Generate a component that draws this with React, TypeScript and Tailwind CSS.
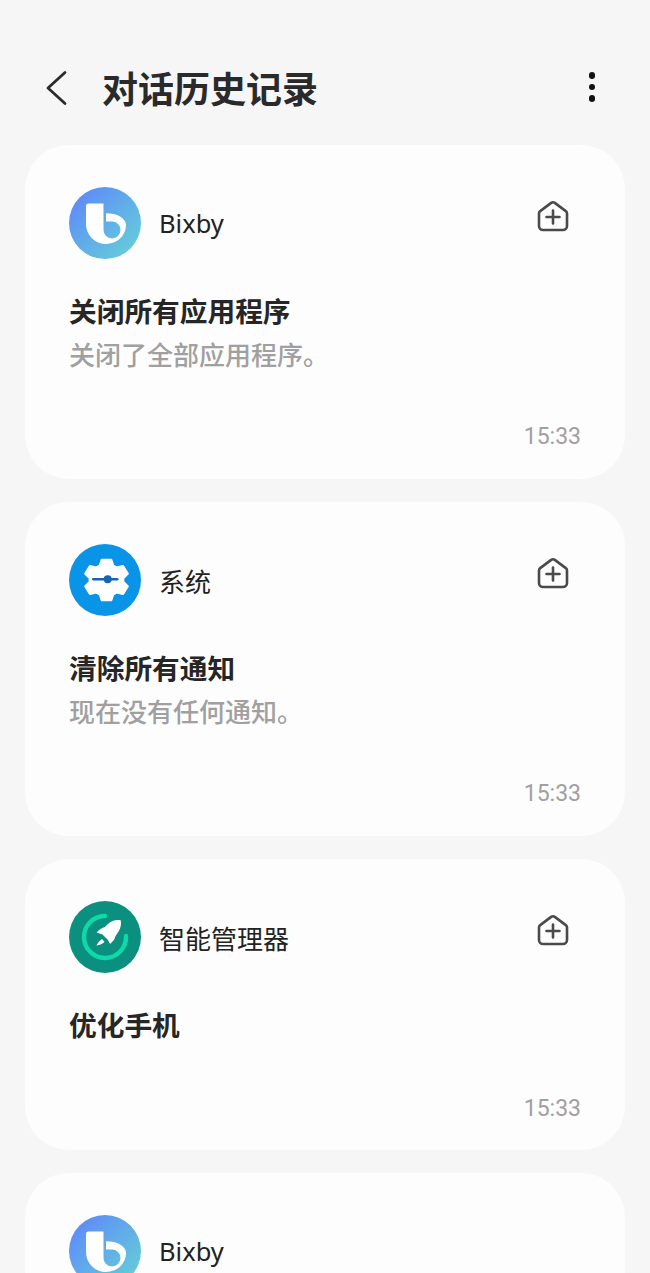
import type { ReactNode } from "react";

const font = "font-['Noto_Sans','Noto_Sans_CJK_SC',sans-serif]";

// six toothed gear around (37.5, 36), a bit wider than tall
const gearPoints = [-90, -30, 30, 90, 150, 210]
  .flatMap((a) =>
    [
      [a - 23, 15.5],
      [a - 12, 20.5],
      [a + 12, 20.5],
      [a + 23, 15.5],
    ].map(([deg, r]) => {
      const rad = (deg * Math.PI) / 180;
      return `${(37.5 + 1.08 * r * Math.cos(rad)).toFixed(1)},${(36 + r * Math.sin(rad)).toFixed(1)}`;
    })
  )
  .join(" ");

function BixbyIcon() {
  return (
    <div className="w-[72px] h-[72px] rounded-full bg-linear-to-br from-[#5f80fb] to-[#67d4d2] shrink-0">
      <svg width="72" height="72" viewBox="0 0 72 72">
        <path
          d="M19.500 16.500H34.500V43A8.500 8.500 0 1 0 43 34.500H37V26.300C48 26.300 57 31 57 38A20 19 0 0 1 37 57A20 20 0 0 1 17 37V19A2.500 2.500 0 0 1 19.500 16.500Z"
          fill="#fff"
        />
      </svg>
    </div>
  );
}

function SystemIcon() {
  return (
    <div className="w-[72px] h-[72px] rounded-full bg-[#0a94e8] shrink-0">
      <svg width="72" height="72" viewBox="0 0 72 72">
        <polygon points={gearPoints} fill="#fff" stroke="#fff" strokeWidth="2.500" strokeLinejoin="round" />
        <rect x="23" y="34" width="26.500" height="2.600" rx="1.300" fill="#1565b0" />
        <circle cx="38.700" cy="35.300" r="4" fill="#1565b0" />
      </svg>
    </div>
  );
}

function ManagerIcon() {
  return (
    <div className="w-[72px] h-[72px] rounded-full bg-[#0b9080] shrink-0">
      <svg width="72" height="72" viewBox="0 0 72 72">
        <path d="M36 15A21 21 0 1 0 57 35" fill="none" stroke="#0fd9a8" strokeWidth="4.400" strokeLinecap="round" />
        <path
          d="M51.700 19.300C47 18.500 41 20 36 26C33 27 30 28.500 27.700 31.500L33.500 33.500L39 39L41 43C44 40.500 46 38 46.500 35C50 31 53 25 51.700 19.300Z"
          fill="#fff"
        />
        <path d="M33 38L35.500 41C33.500 43 31 44 27.500 44.500C28.500 42 30.500 40 33 38Z" fill="#fff" />
      </svg>
    </div>
  );
}

function AddHomeIcon() {
  return (
    <svg width="34" height="34" viewBox="0 0 34 34" fill="none" stroke="#4a4a4a" strokeWidth="2.600" strokeLinecap="round" strokeLinejoin="round">
      <path d="M3 14.500a3 3 0 0 1 1.200-2.400l11-8.200a3 3 0 0 1 3.600 0l11 8.200a3 3 0 0 1 1.200 2.400V27a4 4 0 0 1-4 4H7a4 4 0 0 1-4-4Z" />
      <path d="M17 11.500v13M10.500 18h13" />
    </svg>
  );
}

type CardProps = {
  icon: ReactNode;
  name: string;
  title?: string;
  desc?: string;
  time?: string;
};

function HistoryCard({ icon, name, title, desc, time }: CardProps) {
  return (
    <section className={`bg-[#fdfdfd] rounded-[44px] pt-[42px] px-[44px] ${desc ? "pb-[26px]" : "pb-[25px]"}`}>
      <div className="flex items-start justify-between">
        <div className="flex items-center gap-[18px]">
          {icon}
          {name === "Bixby" ? (
            <span className="text-[25.500px] leading-[36px] text-[#222]">{name}</span>
          ) : (
            <span className="text-[26px] leading-[36px] text-[#222] mt-[4px]">{name}</span>
          )}
        </div>
        {title && (
          <div className="mt-[12px] mr-[11px]">
            <AddHomeIcon />
          </div>
        )}
      </div>
      {title && <h2 className="mt-[32px] text-[27.700px] leading-[40px] font-bold text-[#262626]">{title}</h2>}
      {desc && <p className="mt-[6px] text-[26px] leading-[36px] font-medium text-[#a0a0a0]">{desc}</p>}
      {time && (
        <div className="mt-[48px] text-right font-['Roboto',sans-serif] text-[23px] leading-[32px] text-[#a0a0a0]">{time}</div>
      )}
    </section>
  );
}

export default function App() {
  return (
    <div className={`${font} w-[650px] h-[1273px] overflow-hidden bg-[#f6f6f6]`}>
      <header className="h-[145px] pt-[64px] pl-[46px] pr-[55px] flex items-start">
        <svg width="22" height="36" viewBox="0 0 22 36" fill="none" stroke="#2b2b2b" strokeWidth="2.800" strokeLinecap="round" strokeLinejoin="round" className="mt-[6px] shrink-0">
          <path d="M19 2.500L2 18l17 15.500" />
        </svg>
        <h1 className="ml-[34px] text-[36px] leading-[52px] font-bold text-[#2a2a2a] flex-1">对话历史记录</h1>
        <div className="flex flex-col gap-[5px] mt-[8px]">
          <span className="w-[6.500px] h-[6.500px] rounded-full bg-[#111]" />
          <span className="w-[6.500px] h-[6.500px] rounded-full bg-[#111]" />
          <span className="w-[6.500px] h-[6.500px] rounded-full bg-[#111]" />
        </div>
      </header>
      <main className="mx-[25px] flex flex-col gap-[23px]">
        <HistoryCard icon={<BixbyIcon />} name="Bixby" title="关闭所有应用程序" desc="关闭了全部应用程序。" time="15:33" />
        <HistoryCard icon={<SystemIcon />} name="系统" title="清除所有通知" desc="现在没有任何通知。" time="15:33" />
        <HistoryCard icon={<ManagerIcon />} name="智能管理器" title="优化手机" time="15:33" />
        <HistoryCard icon={<BixbyIcon />} name="Bixby" />
      </main>
    </div>
  );
}
